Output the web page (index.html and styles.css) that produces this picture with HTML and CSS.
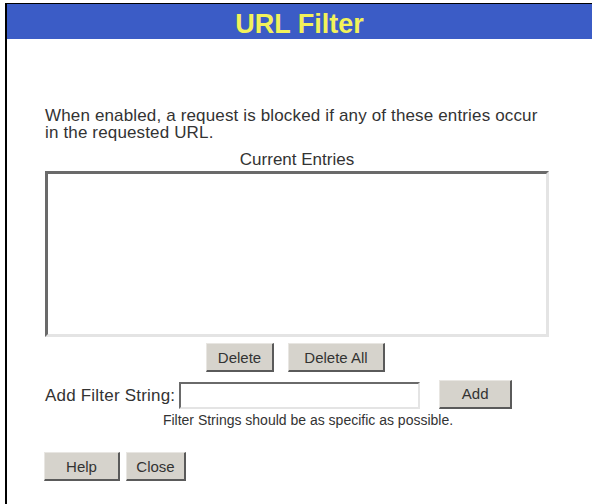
FILE: index.html
```html
<!DOCTYPE html>
<html lang="en">
<head>
  <meta charset="UTF-8" />
  <title>URL Filter</title>
  <link rel="stylesheet" href="styles.css">
</head>
<body>
  <div class="frame">
    <div class="title-bar">URL Filter</div>
    <form class="filter-form">
      <p class="intro">When enabled, a request is blocked if any of these entries occur in the requested URL.</p>
      <div class="list-label">Current Entries</div>
      <div class="entry-list"></div>
      <div class="row-center">
        <button type="button" class="btn btn-delete">Delete</button>
        <button type="button" class="btn btn-delete-all">Delete All</button>
      </div>
      <div class="add-row">
        <label for="filterString">Add Filter String:</label>
        <input type="text" id="filterString" class="text-field" />
        <button type="button" class="btn btn-add">Add</button>
      </div>
      <div class="hint">Filter Strings should be as specific as possible.</div>
      <div class="footer-buttons">
        <button type="button" class="btn btn-help">Help</button>
        <button type="button" class="btn btn-close">Close</button>
      </div>
    </form>
  </div>
</body>
</html>
```

FILE: styles.css
```css
html, body { margin: 0; padding: 0; background: #fff; }
body { font-family: "Liberation Sans", Arial, sans-serif; color: #333; width: 592px; height: 504px; overflow: hidden; }
.frame { margin: 3px 0 0 5px; border-top: 1px solid #000; border-left: 2px solid #000; height: 500px; }
.title-bar { background: #3b5cc6; color: #f2f25a; font-weight: bold; font-size: 27px; text-align: center; height: 35px; line-height: 41px; overflow: hidden; }
.filter-form { padding: 0 0 0 38px; width: 504px; }
.intro { margin: 68px 0 0 0; font-size: 17px; line-height: 17px; letter-spacing: 0.15px; }
.list-label { text-align: center; font-size: 17px; line-height: 17px; margin-top: 10px; }
.entry-list { margin-top: 3px; height: 160px; border-top: 3px solid #6a6a6a; border-left: 3px solid #6a6a6a; border-right: 3px solid #e4e4e4; border-bottom: 3px solid #e4e4e4; }
.btn { font-family: "Liberation Sans", Arial, sans-serif; font-size: 15px; color: #333; background: #d6d3cc; border-top: 1px solid #e8e6e2; border-left: 1px solid #e8e6e2; border-right: 2px solid #5a5a5a; border-bottom: 2px solid #5a5a5a; padding: 0; height: 29px; }
.row-center { display: flex; justify-content: center; gap: 14px; margin: 6px 0 0 -3px; }
.btn-delete { width: 68px; }
.btn-delete-all { width: 97px; }
.add-row { display: flex; align-items: center; margin-top: 10px; }
.add-row label { font-size: 17px; margin-right: 4px; letter-spacing: 0.2px; }
.text-field { width: 241px; height: 27px; padding: 0; box-sizing: border-box; border-top: 2px solid #6a6a6a; border-left: 2px solid #6a6a6a; border-right: 2px solid #e4e4e4; border-bottom: 2px solid #e4e4e4; }
.btn-add { width: 73px; margin-left: 19px; margin-top: -3px; }
.hint { font-size: 14px; text-align: center; margin-top: 3px; padding-left: 22px; }
.footer-buttons { display: flex; gap: 6px; margin-top: 24px; margin-left: -1px; }
.btn-help { width: 76px; }
.btn-close { width: 60px; }
```
